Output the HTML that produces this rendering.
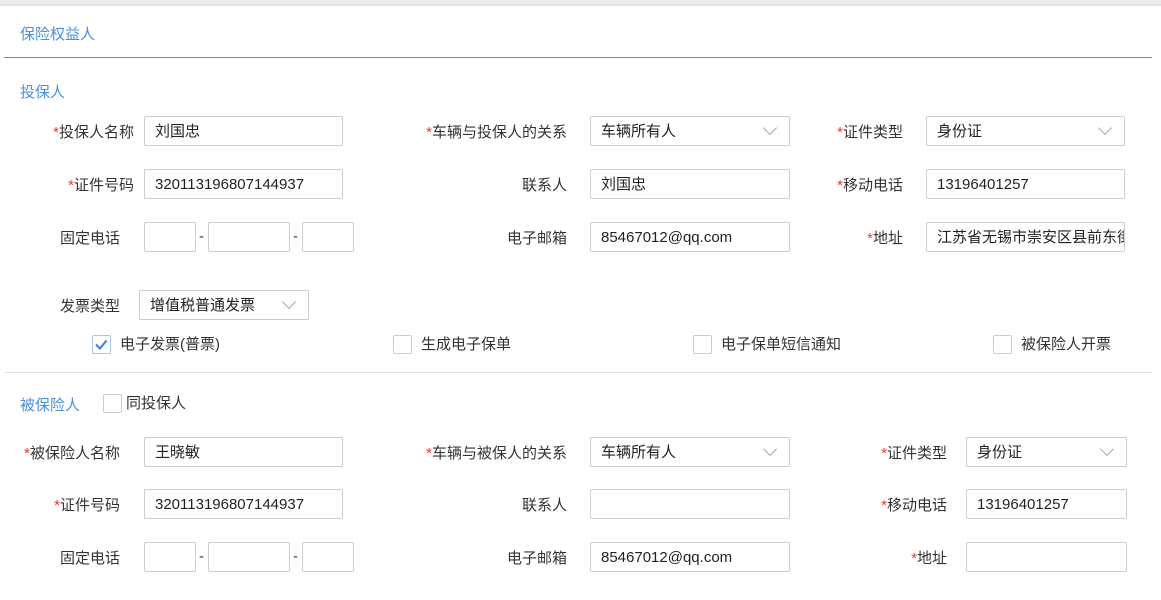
<!DOCTYPE html>
<html><head><meta charset="utf-8"><style>
body{margin:0;width:1161px;height:600px;background:#fff;position:relative;overflow:hidden;font-family:"Liberation Sans","Noto Sans CJK SC",sans-serif;font-size:15px;color:#333}
.a{position:absolute}
.top{left:0;top:0;width:1161px;height:4px;background:#eceeef;border-bottom:2px solid #e2e2e2}
.blue{color:#4a90e2}
.lb{position:absolute;text-align:right;line-height:30px;white-space:nowrap;margin-top:2px}
.lb i{color:#e33;font-style:normal}
.in{position:absolute;height:30px;border:1px solid #ccc;border-radius:2px;box-sizing:border-box;line-height:30px;padding-left:10px;color:#222;white-space:nowrap;overflow:hidden;font-size:15px}
.sel::after{content:"";position:absolute;right:14px;top:6px;width:9px;height:9px;border-right:1px solid #aaa;border-bottom:1px solid #aaa;transform:rotate(45deg)}
.cb{position:absolute;width:19px;height:19px;border:1px solid #ccc;box-sizing:border-box;border-radius:2px}
.ct{position:absolute;line-height:20px;margin-top:1px}
.dash{position:absolute;line-height:30px}
</style></head><body>
<div class="a top"></div>
<div class="a blue" style="left:20px;top:23px">保险权益人</div>
<div class="a" style="left:4px;top:57px;width:1148px;height:1px;background:#4a90e2"></div>
<div class="a blue" style="left:20px;top:81px">投保人</div>

<div class="lb" style="right:1027px;top:116px"><i>*</i>投保人名称</div>
<div class="in" style="left:144px;top:116px;width:199px">刘国忠</div>
<div class="lb" style="right:594px;top:116px"><i>*</i>车辆与投保人的关系</div>
<div class="in sel" style="left:590px;top:116px;width:200px">车辆所有人</div>
<div class="lb" style="right:258px;top:116px"><i>*</i>证件类型</div>
<div class="in sel" style="left:926px;top:116px;width:199px">身份证</div>

<div class="lb" style="right:1027px;top:169px"><i>*</i>证件号码</div>
<div class="in" style="left:144px;top:169px;width:199px">320113196807144937</div>
<div class="lb" style="right:594px;top:169px">联系人</div>
<div class="in" style="left:590px;top:169px;width:200px">刘国忠</div>
<div class="lb" style="right:258px;top:169px"><i>*</i>移动电话</div>
<div class="in" style="left:926px;top:169px;width:199px">13196401257</div>

<div class="lb" style="right:1041px;top:222px">固定电话</div>
<div class="in" style="left:144px;top:222px;width:52px"></div>
<div class="dash" style="left:199px;top:222px">-</div>
<div class="in" style="left:208px;top:222px;width:82px"></div>
<div class="dash" style="left:293px;top:222px">-</div>
<div class="in" style="left:302px;top:222px;width:52px"></div>
<div class="lb" style="right:594px;top:222px">电子邮箱</div>
<div class="in" style="left:590px;top:222px;width:200px">85467012@qq.com</div>
<div class="lb" style="right:258px;top:222px"><i>*</i>地址</div>
<div class="in" style="left:926px;top:222px;width:199px">江苏省无锡市崇安区县前东街</div>

<div class="lb" style="right:1041px;top:290px">发票类型</div>
<div class="in sel" style="left:139px;top:290px;width:170px">增值税普通发票</div>

<div class="cb" style="left:92px;top:335px;border-color:#aac4ee"><svg width="17" height="17" style="position:absolute;left:0;top:0"><path d="M3 8.5 L7 12.5 L13.5 4.5" stroke="#3b7ddd" stroke-width="2" fill="none"/></svg></div>
<div class="ct" style="left:120px;top:334px">电子发票(普票)</div>
<div class="cb" style="left:393px;top:335px"></div><div class="ct" style="left:421px;top:334px">生成电子保单</div>
<div class="cb" style="left:693px;top:335px"></div><div class="ct" style="left:721px;top:334px">电子保单短信通知</div>
<div class="cb" style="left:993px;top:335px"></div><div class="ct" style="left:1021px;top:334px">被保险人开票</div>

<div class="a" style="left:4px;top:372px;width:1148px;height:1px;background:#e4e4e4"></div>
<div class="a blue" style="left:20px;top:394px">被保险人</div>
<div class="cb" style="left:103px;top:394px"></div><div class="ct" style="left:126px;top:393px">同投保人</div>

<div class="lb" style="right:1041px;top:437px"><i>*</i>被保险人名称</div>
<div class="in" style="left:144px;top:437px;width:199px">王晓敏</div>
<div class="lb" style="right:594px;top:437px"><i>*</i>车辆与被保人的关系</div>
<div class="in sel" style="left:590px;top:437px;width:200px">车辆所有人</div>
<div class="lb" style="right:214px;top:437px"><i>*</i>证件类型</div>
<div class="in sel" style="left:966px;top:437px;width:161px">身份证</div>

<div class="lb" style="right:1041px;top:489px"><i>*</i>证件号码</div>
<div class="in" style="left:144px;top:489px;width:199px">320113196807144937</div>
<div class="lb" style="right:594px;top:489px">联系人</div>
<div class="in" style="left:590px;top:489px;width:200px"></div>
<div class="lb" style="right:214px;top:489px"><i>*</i>移动电话</div>
<div class="in" style="left:966px;top:489px;width:161px">13196401257</div>

<div class="lb" style="right:1041px;top:542px">固定电话</div>
<div class="in" style="left:144px;top:542px;width:52px"></div>
<div class="dash" style="left:199px;top:542px">-</div>
<div class="in" style="left:208px;top:542px;width:82px"></div>
<div class="dash" style="left:293px;top:542px">-</div>
<div class="in" style="left:302px;top:542px;width:52px"></div>
<div class="lb" style="right:594px;top:542px">电子邮箱</div>
<div class="in" style="left:590px;top:542px;width:200px">85467012@qq.com</div>
<div class="lb" style="right:214px;top:542px"><i>*</i>地址</div>
<div class="in" style="left:966px;top:542px;width:161px"></div>
</body></html>
